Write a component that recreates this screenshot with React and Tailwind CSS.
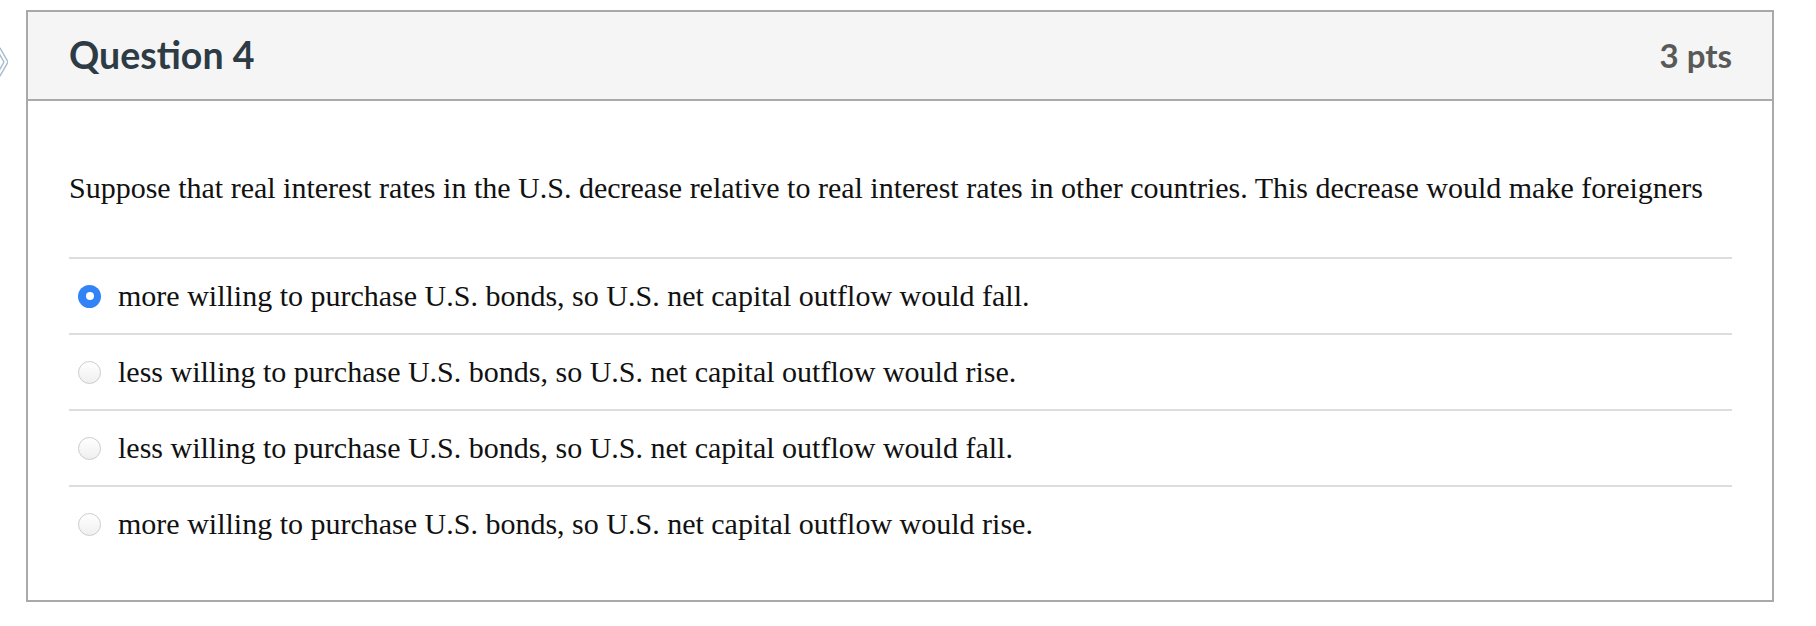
import React from 'react';

const answers = [
  { text: 'more willing to purchase U.S. bonds, so U.S. net capital outflow would fall.', checked: true },
  { text: 'less willing to purchase U.S. bonds, so U.S. net capital outflow would rise.', checked: false },
  { text: 'less willing to purchase U.S. bonds, so U.S. net capital outflow would fall.', checked: false },
  { text: 'more willing to purchase U.S. bonds, so U.S. net capital outflow would rise.', checked: false }
];

const Radio = ({ checked }) =>
  checked ? (
    <span className="flex h-[23px] w-[23px] shrink-0 items-center justify-center rounded-full bg-[#3183f6]">
      <span className="h-[8px] w-[8px] rounded-full bg-white" />
    </span>
  ) : (
    <span className="h-[23px] w-[23px] shrink-0 rounded-full border border-[#cccccc] bg-gradient-to-b from-white to-[#efefef]" />
  );

const App = () => {
  return (
    <div className="min-h-screen bg-white pt-[10px]">
      <div className="flex">
        {/* Side chevron, cut off by the page edge */}
        <div className="w-[26px] shrink-0 pt-[37px]">
          <svg width="12" height="30" viewBox="0 0 12 30" className="-ml-[4px]">
            <polygon
              points="0,1 4,1 12,15 4,29 0,29 8,15"
              fill="none"
              stroke="#a7bccf"
              strokeWidth="1.5"
              strokeLinejoin="round"
            />
          </svg>
        </div>

        {/* Question card */}
        <div className="w-[1748px] border-2 border-[#a9a9a9]">
          <div className="flex h-[89px] items-center justify-between border-b-2 border-[#a9a9a9] bg-[#f5f5f5] pl-[41px] pr-[40px] font-['Lato',sans-serif] font-bold">
            <h2 className="text-[37.5px] text-[#2d3b45]">Question 4</h2>
            <span className="text-[33px] text-[#595959]">3 pts</span>
          </div>

          <div className="pl-[41px] pr-[40px] pb-[39px] font-['Liberation_Serif','Times_New_Roman',serif] text-[30px] text-[#111]">
            <p className="pt-[64px] pb-[46px] leading-[46px]">
              Suppose that real interest rates in the U.S. decrease relative to real interest rates in other countries. This decrease would make foreigners
            </p>

            {answers.map((a, i) => (
              <div key={i} className="flex h-[76px] items-center gap-[17px] border-t-2 border-[#dddddd] pl-[9px]">
                <Radio checked={a.checked} />
                <span className="leading-[46px]">{a.text}</span>
              </div>
            ))}
          </div>
        </div>
      </div>
    </div>
  );
};

export default App;
